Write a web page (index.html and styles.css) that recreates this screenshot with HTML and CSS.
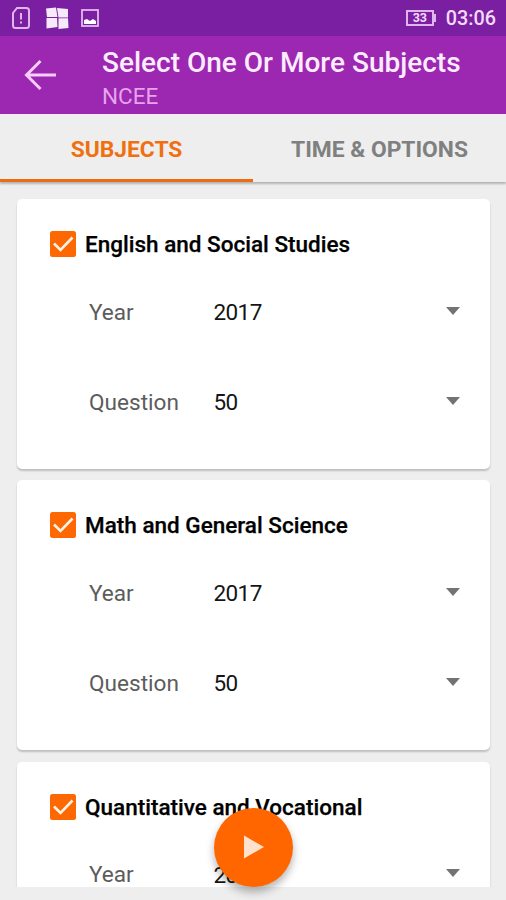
FILE: index.html
```html
<!DOCTYPE html>
<html lang="en">
<head>
<meta charset="utf-8">
<title>Select One Or More Subjects</title>
<link rel="stylesheet" href="styles.css">
</head>
<body>
<div class="screen">
  <div class="status">
    <svg class="sim" width="20" height="24" viewBox="0 0 20 24"><path d="M6 2h9.500a2.500 2.500 0 0 1 2.500 2.500v15a2.500 2.500 0 0 1-2.500 2.500h-11A2.500 2.500 0 0 1 2 19.500V7z" fill="none" stroke="#dfb5ec" stroke-width="2"/><path d="M10 7v6.500M10 15.500v2" stroke="#dfb5ec" stroke-width="2"/></svg>
    <svg class="tiles" width="24" height="24" viewBox="0 0 24 24"><g fill="#f6eafa"><path d="M1 2.500l10-1 1.500 9.500H2z"/><path d="M12 2l11 1v8.500h-9.500z"/><path d="M1.500 12h10.500l.5 9-11 1.500z"/><path d="M13.500 12.300H23l.5 9.700-10 1z"/></g></svg>
    <svg class="image" width="18" height="18" viewBox="0 0 18 18"><rect x="1" y="1" width="16" height="16" fill="none" stroke="#e2b9ed" stroke-width="1.800"/><path d="M3 15v-4l3-1 3 2 3-2 3 2v3z" fill="#fff"/></svg>
    <div class="battery"><span>33</span></div>
    <div class="clock">03:06</div>
  </div>
  <header class="appbar">
    <svg class="back" width="34" height="32" viewBox="0 0 34 32"><path d="M33 16H3.500M17.500 2L3.500 16l14 14" fill="none" stroke="#f6cdfb" stroke-width="3"/></svg>
    <div class="titles">
      <div class="title">Select One Or More Subjects</div>
      <div class="subtitle">NCEE</div>
    </div>
  </header>
  <nav class="tabs">
    <div class="tab active"><span>SUBJECTS</span></div>
    <div class="tab"><span>TIME &amp; OPTIONS</span></div>
  </nav>
  <main class="list">
    <section class="card">
      <div class="head"><svg class="check" width="26" height="26" viewBox="0 0 26 26"><rect width="26" height="26" rx="2.500" fill="#fd6803"/><path d="M4 12.500l6.500 6.500L22.500 6.500" fill="none" stroke="#fff3e6" stroke-width="2.600"/></svg><span>English and Social Studies</span></div>
      <div class="row"><span class="label">Year</span><span class="value">2017</span><i class="arrow"></i></div>
      <div class="row"><span class="label">Question</span><span class="value">50</span><i class="arrow"></i></div>
    </section>
    <section class="card">
      <div class="head"><svg class="check" width="26" height="26" viewBox="0 0 26 26"><rect width="26" height="26" rx="2.500" fill="#fd6803"/><path d="M4 12.500l6.500 6.500L22.500 6.500" fill="none" stroke="#fff3e6" stroke-width="2.600"/></svg><span>Math and General Science</span></div>
      <div class="row"><span class="label">Year</span><span class="value">2017</span><i class="arrow"></i></div>
      <div class="row"><span class="label">Question</span><span class="value">50</span><i class="arrow"></i></div>
    </section>
    <section class="card">
      <div class="head"><svg class="check" width="26" height="26" viewBox="0 0 26 26"><rect width="26" height="26" rx="2.500" fill="#fd6803"/><path d="M4 12.500l6.500 6.500L22.500 6.500" fill="none" stroke="#fff3e6" stroke-width="2.600"/></svg><span>Quantitative and Vocational</span></div>
      <div class="row"><span class="label">Year</span><span class="value">2017</span><i class="arrow"></i></div>
    </section>
  </main>
  <div class="fab"><svg width="20" height="24" viewBox="0 0 20 24"><path d="M0 0.500L20 12L0 23.500z" fill="#ffe1cc"/></svg></div>
</div>
</body>
</html>
```
FILE: styles.css
```css
* { box-sizing: border-box; }
body { margin: 0; font-family: Roboto, "Liberation Sans", sans-serif; }
.screen {
  position: relative;
  width: 506px;
  height: 900px;
  overflow: hidden;
  background: #eee;
  display: flex;
  flex-direction: column;
}
.status {
  height: 36px;
  flex: none;
  background: #7b1fa2;
  display: flex;
  align-items: center;
  padding: 0 10px 0 11px;
  color: #f3daf8;
}
.sim { margin: -1px 14px 0 0; }
.tiles { margin-right: 12px; }
.battery {
  position: relative;
  width: 28px;
  height: 16px;
  margin: -1px 12px 0 auto;
  border: 2px solid #dfb5ec;
  font-size: 12.5px;
  line-height: 12px;
  font-weight: 700;
  text-align: center;
}
.battery::after {
  content: "";
  position: absolute;
  right: -4px;
  top: 2px;
  width: 2px;
  height: 8px;
  background: #dfb5ec;
}
.clock { font-size: 19.8px; font-weight: 500; line-height: 36px; margin-top: 2px; }
.appbar {
  height: 78px;
  flex: none;
  background: #9c27b0;
  display: flex;
  align-items: flex-start;
  padding: 10px 0 0 23px;
}
.back { margin: 13px 45px 0 0; }
.titles { white-space: nowrap; }
.title { font-size: 28px; line-height: 34px; font-weight: 500; color: #fdecff; }
.subtitle { font-size: 22.5px; line-height: 28px; margin-top: 2px; color: #e6a3ee; }
.tabs {
  height: 68px;
  flex: none;
  display: flex;
  position: relative;
  border-top: 1px solid #f8e6fb;
  box-shadow: 0 2px 2px rgba(0, 0, 0, .25);
  background: #eee;
  z-index: 1;
}
.tab {
  flex: 1;
  display: flex;
  align-items: center;
  justify-content: center;
  border-bottom: 3px solid transparent;
  padding-top: 5px;
  font-size: 22.8px;
  font-weight: 700;
  color: #808080;
}
.tab.active { color: #f07010; border-color: #ee6c10; }
.list {
  height: 704.5px;
  flex: none;
  overflow: hidden;
  padding: 17px 16px 0 17px;
  display: flex;
  flex-direction: column;
  gap: 11.3px;
}
.card {
  height: 270px;
  flex: none;
  padding: 22px 30px 0 32.500px;
  background: #fff;
  border-radius: 5px;
  box-shadow: 0 2px 2px rgba(0, 0, 0, .2);
}
.head {
  display: flex;
  align-items: center;
  height: 46px;
  font-size: 22.5px;
  font-weight: 500;
  color: #000;
  white-space: nowrap;
  -webkit-text-stroke: .25px #000;
}
.check { margin-right: 9.5px; flex: none; }
.row { height: 90px; display: flex; align-items: center; padding-left: 39.5px; font-size: 22.6px; }
.label { width: 124.5px; color: #5c5c5c; }
.value { flex: 1; color: #151515; font-size: 22.5px; letter-spacing: -.6px; }
.arrow { border: 7px solid transparent; border-top: 8px solid #737373; border-bottom: 0; margin-top: -3px; }
.fab {
  position: absolute;
  left: 214px;
  top: 807.5px;
  width: 79px;
  height: 79px;
  border-radius: 50%;
  background: #ff6600;
  display: flex;
  align-items: center;
  justify-content: center;
  box-shadow: 0 5px 8px rgba(0, 0, 0, .3);
  z-index: 2;
}
```
